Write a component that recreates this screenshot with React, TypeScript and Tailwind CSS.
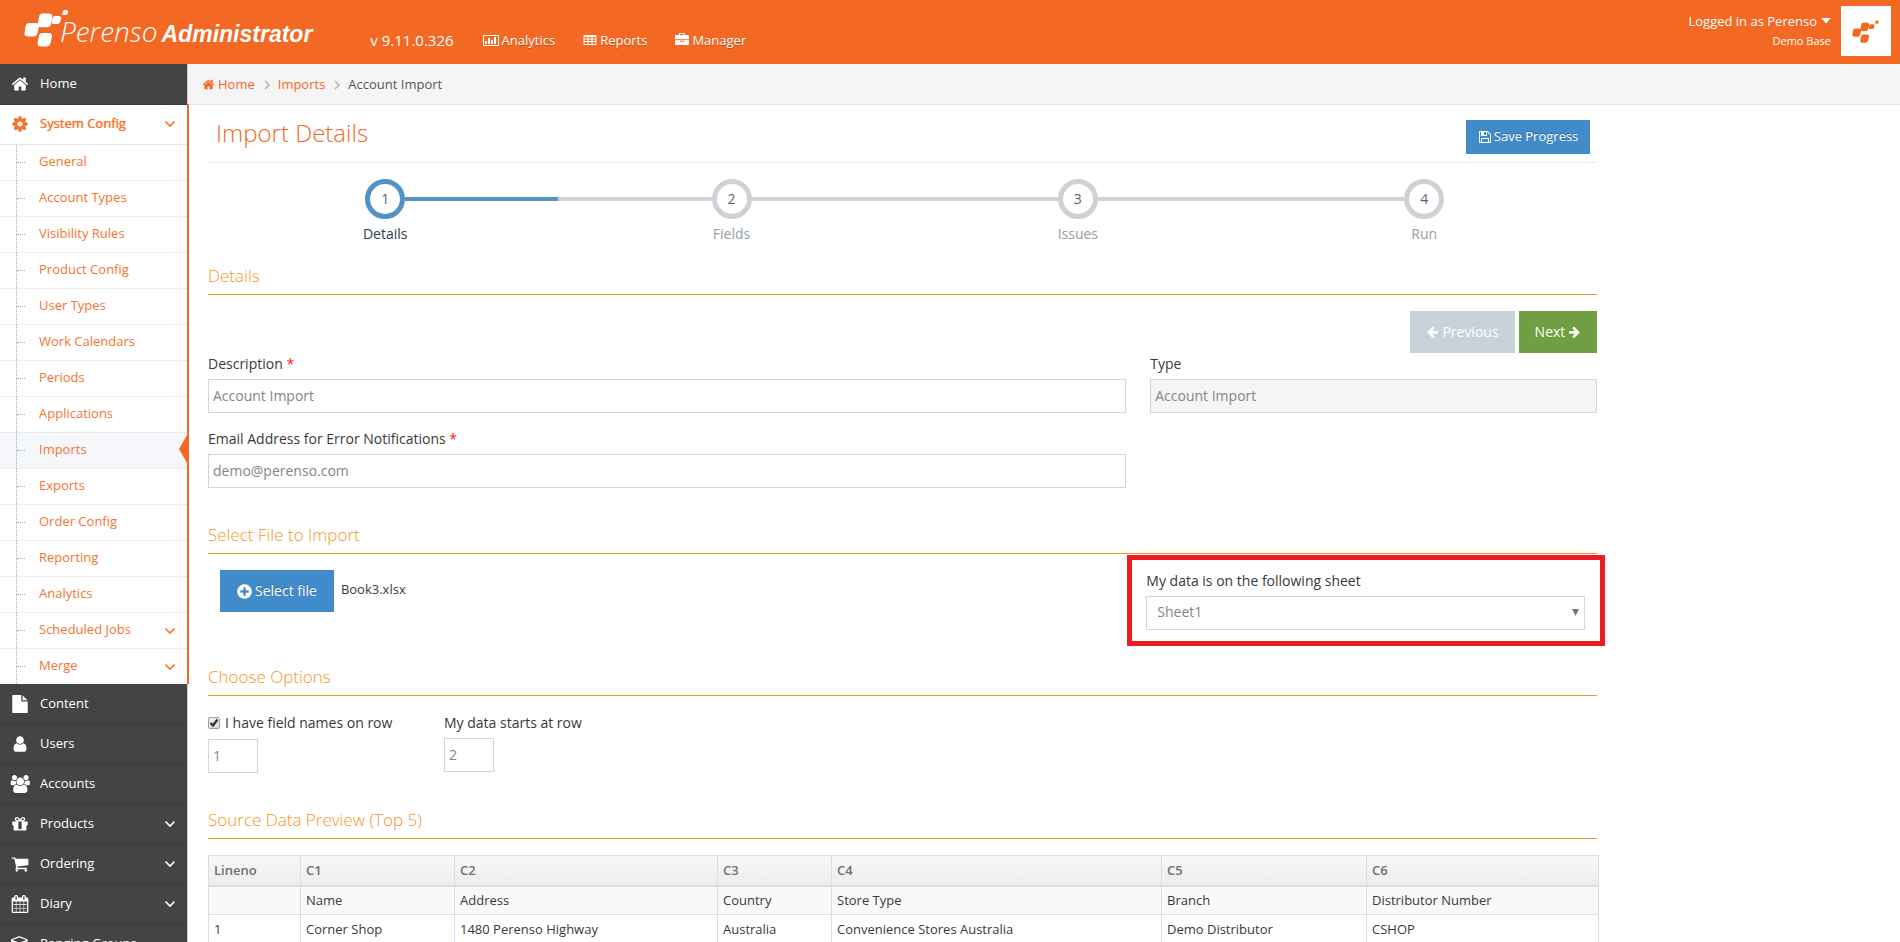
import { useState } from 'react';
import type { ReactNode } from 'react';
import clsx from 'clsx';

interface IconProps {
  name: string;
  className?: string;
  viewBox?: string;
}

interface MenuItem {
  label: string;
  icon: string;
  viewBox?: string;
  expandable?: boolean;
}

const icons: Record<string, string> = {
  home: 'M1472 992v480q0 26-19 45t-45 19h-384v-384h-256v384h-384q-26 0-45-19t-19-45v-480q0-1 .5-3t.5-3l575-474 575 474q1 2 1 6zm223-69l-62 74q-8 9-21 11h-3q-13 0-21-7l-692-577-692 577q-12 8-24 7-13-2-21-11l-62-74q-8-10-7-23.5t11-21.5l719-599q32-26 76-26t76 26l244 204v-195q0-14 9-23t23-9h192q14 0 23 9t9 23v408l219 182q10 8 11 21.5t-7 23.5z',
  cog: 'M1152 896q0-106-75-181t-181-75-181 75-75 181 75 181 181 75 181-75 75-181zm512-109v222q0 12-8 23t-20 13l-185 28q-19 54-39 91 35 50 107 138 10 12 10 25t-9 23q-27 37-99 108t-94 71q-12 0-26-9l-138-108q-44 23-91 38-16 136-29 186-7 28-36 28h-222q-14 0-24.5-8.5t-11.5-21.5l-28-184q-49-16-90-37l-141 107q-10 9-25 9-14 0-25-11-126-114-165-168-7-10-7-23 0-12 8-23 15-21 51-66.5t54-70.5q-27-50-41-99l-183-27q-13-2-21-12.5t-8-23.5v-222q0-12 8-23t19-13l186-28q14-46 39-92-40-57-107-138-10-12-10-24 0-10 9-23 26-36 98.5-107.5t94.5-71.5q13 0 26 10l138 107q44-23 91-38 16-136 29-186 7-28 36-28h222q14 0 24.5 8.5t11.5 21.5l28 184q49 16 90 37l142-107q9-9 24-9 13 0 25 10 129 119 165 170 7 8 7 22 0 12-8 23-15 21-51 66.5t-54 70.5q26 50 41 98l183 28q13 2 21 12.5t8 23.5z',
  file: 'M1152 512v-472q22 14 36 28l408 408q14 14 28 36h-472zm-128 32q0 40 28 68t68 28h544v1056q0 40-28 68t-68 28h-1344q-40 0-68-28t-28-68v-1600q0-40 28-68t68-28h800v544z',
  user: 'M1536 1399q0 109-62.5 187t-150.500 78h-854q-88 0-150.500-78t-62.500-187q0-85 8.500-160.500t31.500-152 58.500-131 94-89 134.500-34.500q131 128 313 128t313-128q76 0 134.500 34.500t94 89 58.500 131 31.500 152 8.500 160.500zm-256-887q0 159-112.500 271.500t-271.500 112.500-271.500-112.500-112.500-271.500 112.500-271.500 271.500-112.500 271.500 112.500 112.500 271.500z',
  users: 'M657 896q-162 5-265 128h-134q-82 0-138-40.500t-56-118.500q0-353 124-353 6 0 43.500 21t97.500 42.500 119 21.500q67 0 133-23-5 37-5 66 0 159 81 256zm1071 637q0 120-73 189.500t-194 69.500h-874q-121 0-194-69.500t-73-189.500q0-53 3.500-103.500t14-109 26.500-108.500 43-97.500 62-81 85.500-53.500 111.500-20q10 0 43 21.500t73 48 107 48 135 21.500 135-21.500 107-48 73-48 43-21.500q61 0 111.500 20t85.500 53.500 62 81 43 97.500 26.500 108.500 14 109 3.500 103.500zm-1024-1277q0 106-75 181t-181 75-181-75-75-181 75-181 181-75 181 75 75 181zm704 384q0 159-112.500 271.500t-271.500 112.500-271.500-112.500-112.500-271.500 112.500-271.500 271.500-112.500 271.500 112.500 112.500 271.500zm576 225q0 78-56 118.500t-138 40.500h-134q-103-123-265-128 81-97 81-256 0-29-5-66 66 23 133 23 59 0 119-21.500t97.500-42.500 43.500-21q124 0 124 353zm-128-609q0 106-75 181t-181 75-181-75-75-181 75-181 181-75 181 75 75 181z',
  gift: 'M1056 1356v-716h-320v716q0 25 18 38.500t46 13.500h192q28 0 46-13.500t18-38.500zm-456-844h195l-126-161q-26-31-69-31-40 0-68 28t-28 68 28 68 68 28zm688-96q0-40-28-68t-68-28q-43 0-69 31l-125 161h194q40 0 68-28t28-68zm376 256v320q0 14-9 23t-23 9h-96v416q0 40-28 68t-68 28h-1088q-40 0-68-28t-28-68v-416h-96q-14 0-23-9t-9-23v-320q0-14 9-23t23-9h440q-93 0-158.500-65.500t-65.500-158.500 65.500-158.500 158.500-65.500q107 0 168 77l128 165 128-165q61-77 168-77 93 0 158.500 65.500t65.500 158.500-65.500 158.500-158.500 65.500h440q14 0 23 9t9 23z',
  cart: 'M704 1536q0 52-38 90t-90 38-90-38-38-90 38-90 90-38 90 38 38 90zm896 0q0 52-38 90t-90 38-90-38-38-90 38-90 90-38 90 38 38 90zm128-1088v512q0 24-16.500 42.500t-40.500 21.500l-1044 122q13 60 13 70 0 16-24 64h920q26 0 45 19t19 45-19 45-45 19h-1024q-26 0-45-19t-19-45q0-11 8-31.500t16-36 21.500-40 15.500-29.500l-177-823h-204q-26 0-45-19t-19-45 19-45 45-19h256q16 0 28.500 6.500t19.500 15.500 13 24.500 8 26 5.500 29.500 4.500 26h1201q26 0 45 19t19 45z',
  calendar: 'M192 1664h288v-288h-288v288zm352 0h320v-288h-320v288zm-352-352h288v-320h-288v320zm352 0h320v-320h-320v320zm-352-384h288v-288h-288v288zm736 736h320v-288h-320v288zm-384-736h320v-288h-320v288zm768 736h288v-288h-288v288zm-384-352h320v-320h-320v320zm-352-864v-288q0-13-9.500-22.500t-22.500-9.500h-64q-13 0-22.500 9.500t-9.500 22.500v288q0 13 9.500 22.500t22.500 9.500h64q13 0 22.500-9.500t9.500-22.500zm736 864h288v-320h-288v320zm-384-384h320v-288h-320v288zm384 0h288v-288h-288v288zm32-480v-288q0-13-9.500-22.500t-22.500-9.500h-64q-13 0-22.500 9.500t-9.500 22.500v288q0 13 9.500 22.500t22.500 9.500h64q13 0 22.500-9.500t9.500-22.500zm384-64v1280q0 52-38 90t-90 38h-1408q-52 0-90-38t-38-90v-1280q0-52 38-90t90-38h128v-96q0-66 47-113t113-47h64q66 0 113 47t47 113v96h384v-96q0-66 47-113t113-47h64q66 0 113 47t47 113v96h128q52 0 90 38t38 90z',
  cube: 'M896 1629l640-349v-636l-640 233v752zm-64-865l698-254-698-254-698 254zm832-252v768q0 35-18 65t-49 47l-704 384q-28 16-61 16t-61-16l-704-384q-31-17-49-47t-18-65v-768q0-40 23-73t61-47l704-256q22-8 44-8t44 8l704 256q38 14 61 47t23 73z',
  briefcase: 'M640 256h512v-128h-512v128zm1152 640v480q0 66-47 113t-113 47h-1472q-66 0-113-47t-47-113v-480h672v160q0 26 19 45t45 19h320q26 0 45-19t19-45v-160h672zm-768 0v128h-256v-128h256zm768-480v384h-1792v-384q0-66 47-113t113-47h352v-160q0-40 28-68t68-28h576q40 0 68 28t28 68v160h352q66 0 113 47t47 113z',
  chart: 'M0 256H2048V1664H0V256zm128 128v1152H1920V384H128zM256 1408V1024H512v384H256zm384 0V640H896v768H640zm384 0V896h256v512h-256zm384 0V512h256v896h-256z',
  table: 'M64 352q0-96 96-96H1632q96 0 96 96V1440q0 96-96 96H160q-96 0-96-96V352zm128 160V704H576V512H192zm512 0V704h384V512H704zm512 0V704h384V512h-384zM192 832v192H576V832H192zm512 0v192h384V832H704zm512 0v192h384V832h-384zM192 1152v256H576v-256H192zm512 0v256h384v-256H704zm512 0v256h384v-256h-384z',
  save: 'M512 1536h768v-384h-768v384zm896 0h128v-896q0-14-10-38.500t-20-34.500l-281-281q-10-10-34-20t-39-10v416q0 40-28 68t-68 28h-576q-40 0-68-28t-28-68v-416h-128v1280h128v-416q0-40 28-68t68-28h832q40 0 68 28t28 68v416zm-384-928v-320q0-13-9.500-22.500t-22.500-9.500h-192q-13 0-22.500 9.500t-9.500 22.500v320q0 13 9.500 22.500t22.500 9.500h192q13 0 22.500-9.500t9.500-22.500zm640 32v928q0 40-28 68t-68 28h-1344q-40 0-68-28t-28-68v-1344q0-40 28-68t68-28h928q40 0 88 20t76 48l280 280q28 28 48 76t20 88z',
  left: 'M1664 896v128q0 53-32.5 90.500t-84.500 37.500h-704l293 294q38 36 38 90t-38 90l-75 76q-37 37-90 37-52 0-91-37l-651-652q-37-37-37-90 0-52 37-91l651-650q38-38 91-38 52 0 90 38l75 74q38 38 38 91t-38 91l-293 293h704q52 0 84.500 37.500t32.500 90.500z',
  right: 'M1600 960q0 54-37 91l-651 651q-39 37-91 37-51 0-90-37l-75-75q-38-38-38-91t38-91l293-293h-704q-52 0-84.500-37.500t-32.500-90.500v-128q0-53 32.500-90.500t84.500-37.500h704l-293-294q-38-36-38-90t38-90l75-75q38-38 90-38 53 0 91 38l651 651q37 35 37 90z',
  plus: 'M1344 960v-128q0-26-19-45t-45-19h-256v-256q0-26-19-45t-45-19h-128q-26 0-45 19t-19 45v256h-256q-26 0-45 19t-19 45v128q0 26 19 45t45 19h256v256q0 26 19 45t45 19h128q26 0 45-19t19-45v-256h256q26 0 45-19t19-45zm320-64q0 209-103 385.500t-279.500 279.500-385.500 103-385.500-103-279.500-279.500-103-385.500 103-385.500 279.500-279.500 385.500-103 385.500 103 279.500 279.500 103 385.500z',
};

function Icon({ name, className, viewBox = '0 0 1792 1792' }: IconProps) {
  return (
    <svg viewBox={viewBox} className={clsx('shrink-0', className)} fill="currentColor" fillRule="evenodd" aria-hidden="true">
      <path d={icons[name]} />
    </svg>
  );
}

function ChevronDown({ className }: { className?: string }) {
  return (
    <svg viewBox="0 0 12 8" className={clsx('h-2 w-3 shrink-0', className)} fill="none" stroke="currentColor" strokeWidth="1.6" aria-hidden="true">
      <path d="M1.500 1.500 6 6l4.500-4.500" />
    </svg>
  );
}

function CrumbArrow() {
  return (
    <svg viewBox="0 0 6 10" className="mr-2 ml-[9px] h-2.5 w-1.5" fill="none" stroke="#b2b6bf" strokeWidth="1.6" aria-hidden="true">
      <path d="M1 1l4 4-4 4" />
    </svg>
  );
}

function LogoMark({ className }: { className?: string }) {
  return (
    <svg viewBox="0 0 46 38" className={clsx('shrink-0', className)} fill="currentColor" aria-hidden="true">
      <path d="M5 14h7q3.500 0 3 3l-1.500 7q-.8 3.500-4 3.500H4q-4 0-3.500-3.500L1.500 17.500Q2 14 5 14z" />
      <path d="M18 4.500h7q3.800 0 3.300 3.500L27 15q-.7 3.200-4 3.200h-6q-3.700 0-3.200-3.500L15 8q.6-3.500 3-3.500z" />
      <path d="M18 24h7q3.500 0 3 3.500L26.500 34q-.8 3.500-4 3.500H17q-4 0-3.500-3.500l1.200-6.500Q15.300 24 18 24z" />
      <path d="M31 7h4q2.300 0 2 2l-.7 3.500Q35.700 15 33.500 15h-4q-2.200 0-1.800-2l.8-4Q29 7 31 7z" />
      <path d="M40.500 1h2q2 0 1.700 1.500l-.5 2Q43.200 6 41.500 6h-2Q38 6 38.200 4.500l.5-2Q39 1 40.500 1z" />
    </svg>
  );
}

const navLinks = [
  { label: 'Analytics', icon: 'chart', viewBox: '0 0 2048 1792' },
  { label: 'Reports', icon: 'table' },
  { label: 'Manager', icon: 'briefcase' },
];

const configItems = [
  'General', 'Account Types', 'Visibility Rules', 'Product Config', 'User Types',
  'Work Calendars', 'Periods', 'Applications', 'Imports', 'Exports', 'Order Config',
  'Reporting', 'Analytics', 'Scheduled Jobs', 'Merge',
];
const expandableConfig = ['Scheduled Jobs', 'Merge'];

const menuItems: MenuItem[] = [
  { label: 'Content', icon: 'file' },
  { label: 'Users', icon: 'user' },
  { label: 'Accounts', icon: 'users', viewBox: '0 0 2048 1792' },
  { label: 'Products', icon: 'gift', expandable: true },
  { label: 'Ordering', icon: 'cart', expandable: true },
  { label: 'Diary', icon: 'calendar', expandable: true },
  { label: 'Ranging Groups', icon: 'cube' },
];

const steps = ['Details', 'Fields', 'Issues', 'Run'];

const columns = [
  { label: 'Lineno', width: 'w-[92px]' },
  { label: 'C1', width: 'w-[154px]' },
  { label: 'C2', width: 'w-[263px]' },
  { label: 'C3', width: 'w-[114px]' },
  { label: 'C4', width: 'w-[330px]' },
  { label: 'C5', width: 'w-[205px]' },
  { label: 'C6', width: 'w-[232px]' },
];

const rows = [
  ['', 'Name', 'Address', 'Country', 'Store Type', 'Branch', 'Distributor Number'],
  ['1', 'Corner Shop', '1480 Perenso Highway', 'Australia', 'Convenience Stores Australia', 'Demo Distributor', 'CSHOP'],
];

function Header() {
  return (
    <header className="flex h-16 shrink-0 items-start bg-[#f36822] text-white">
      <a href="#" className="flex pt-[9px] pl-6">
        <LogoMark className="h-[38px] w-[46px]" />
        <span className="-ml-2.5 flex items-baseline gap-1 pt-1">
          <span className="text-[28px] leading-9 font-light italic">Perenso</span>
          <span className="font-['Liberation_Sans_Narrow','Liberation_Sans',sans-serif] text-[23px] leading-9 font-bold italic">Administrator</span>
        </span>
      </a>
      <span className="pt-7 pl-[58px] text-[15px] leading-6">v 9.11.0.326</span>
      <nav className="flex gap-7 pt-[30px] pl-[29px] text-[13px] leading-5 [text-shadow:0_1px_0_rgba(0,0,0,0.25)]">
        {navLinks.map(link => (
          <a key={link.label} href="#" className="flex items-center gap-[3px]">
            <Icon name={link.icon} viewBox={link.viewBox} className="h-3.5" />
            {link.label}
          </a>
        ))}
      </nav>
      <div className="ml-auto flex gap-2.5 pt-1.5 pr-[9px]">
        <div className="flex flex-col items-end pt-[5px]">
          <button type="button" className="flex items-center gap-1 text-[13px] leading-5">
            Logged in as Perenso
            <svg viewBox="0 0 10 6" className="h-1.5 w-2.5" fill="currentColor" aria-hidden="true"><path d="M0 0h10L5 5.500z" /></svg>
          </button>
          <span className="text-[11px] leading-5">Demo Base</span>
        </div>
        <div className="flex size-[50px] items-center justify-center bg-white">
          <LogoMark className="h-[23px] w-7 text-[#f36822]" />
        </div>
      </div>
    </header>
  );
}

function Sidebar() {
  return (
    <aside className="w-[188px] shrink-0 border-r border-[#ccc] bg-[#444] text-[13px] text-white">
      <a href="#" className="flex h-10 items-center">
        <span className="flex w-10 justify-center"><Icon name="home" className="h-[18px]" /></span>
        Home
      </a>

      {/* open section, its edge runs over the sidebar border */}
      <div className="relative -mr-0.5 border-r-2 border-[#f36822] bg-white text-[#f3752f]">
        <button type="button" className="flex h-10 w-full items-center border-t border-[#393939] pr-[11px] pb-0.5 text-left">
          <span className="flex w-10 justify-center"><Icon name="cog" className="h-[18px]" /></span>
          <span className="grow [text-shadow:0_0_1px_#f3752f]">System Config</span>
          <ChevronDown />
        </button>
        <ul className="border-t border-[#e5e5e5]">
          {configItems.map((item, i) => (
            <li
              key={item}
              className={clsx('relative border-dotted border-[#dcdcdc]', i === 0 ? 'h-[35px]' : 'h-9 border-t', item === 'Imports' && 'bg-[#f6f7fb]')}
            >
              <a href="#" className="flex h-full items-center pr-[11px]">
                <span className="h-full w-[17px] border-r border-dotted border-[#8fb1cc]" />
                <span className="w-2 border-t border-dotted border-[#8fb1cc]" />
                <span className="grow pb-0.5 pl-3.5">{item}</span>
                {expandableConfig.includes(item) && <ChevronDown />}
              </a>
              {item === 'Imports' && (
                <svg viewBox="0 0 8 28" className="absolute top-0.5 right-0 h-7 w-2" fill="#f36822" aria-hidden="true"><path d="M8 0v28L0 14z" /></svg>
              )}
            </li>
          ))}
        </ul>
      </div>

      {menuItems.map((item, i) => (
        <a key={item.label} href="#" className={clsx('flex h-10 items-center pr-[11px]', i > 0 && 'border-t border-[#393939] pb-0.5')}>
          <span className="flex w-10 justify-center"><Icon name={item.icon} viewBox={item.viewBox} className="h-[18px]" /></span>
          <span className="grow">{item.label}</span>
          {item.expandable && <ChevronDown />}
        </a>
      ))}
    </aside>
  );
}

function SectionTitle({ children }: { children: ReactNode }) {
  return <h2 className="border-b border-[#f7941e] pb-1.5 text-[17px] leading-6 font-light text-[#f7941e]">{children}</h2>;
}

function Wizard() {
  return (
    <ol className="flex pt-4 pl-1 text-sm">
      {steps.map((step, i) => (
        <li key={step} className="flex flex-1 flex-col items-center">
          <div className="flex w-full items-center">
            <span className={clsx('h-1 grow', i > 0 && 'bg-[#ced1d6]')} />
            <span className={clsx('flex size-10 items-center justify-center rounded-full border-[5px] bg-white leading-5 text-[#546474]', i === 0 ? 'border-[#5293c4]' : 'border-[#ced1d6]')}>
              {i + 1}
            </span>
            <span className={clsx('h-1 grow', i === 0 && 'bg-[#5293c4]', i > 0 && i < 3 && 'bg-[#ced1d6]')} />
          </div>
          <span className={clsx('mt-[5px] leading-5', i === 0 ? 'text-[#2b3d53]' : 'text-[#949ea7]')}>{step}</span>
        </li>
      ))}
    </ol>
  );
}

const fieldClass = 'block h-[34px] w-full border border-[#d5d5d5] px-1 pb-0.5 text-sm text-[#858585] outline-none';

export default function App() {
  const [description, setDescription] = useState('Account Import');
  const [email, setEmail] = useState('demo@perenso.com');
  const [hasNames, setHasNames] = useState(true);
  const [nameRow, setNameRow] = useState('1');
  const [startRow, setStartRow] = useState('2');

  return (
    <div className="flex h-screen flex-col overflow-hidden bg-white font-['Open_Sans',sans-serif] text-[#393939]">
      <Header />
      <div className="flex grow">
        <Sidebar />
        <main className="min-w-0 grow">
          <nav aria-label="Breadcrumb" className="flex h-[41px] items-center border-b border-[#e5e5e5] bg-[#f5f5f5] px-3.5 pt-px text-[13px] text-[#555]">
            <a href="#" className="flex items-center gap-[3px] text-[#f36822]"><Icon name="home" className="h-[13px]" />Home</a>
            <CrumbArrow />
            <a href="#" className="text-[#f36822]">Imports</a>
            <CrumbArrow />
            <span>Account Import</span>
          </nav>

          <div className="px-2">
            <div className="w-10/12 px-3">
              <div className="flex items-start justify-between border-b border-dotted border-[#dcdcdc] pt-[15px] pr-[7px] pb-2 pl-2">
                <h1 className="text-2xl leading-[26px] font-light text-[#f36822]">Import Details</h1>
                <button type="button" className="flex h-[34px] items-center gap-0.5 bg-[#428bca] px-3 text-[13px] text-white [text-shadow:0_-1px_0_rgba(0,0,0,0.25)]">
                  <Icon name="save" className="h-3.5" />
                  Save Progress
                </button>
              </div>

              <Wizard />

              <section className="pt-5">
                <SectionTitle>Details</SectionTitle>
                <div className="flex justify-end gap-1 pt-4 text-sm text-white [text-shadow:0_-1px_0_rgba(0,0,0,0.2)]">
                  <button type="button" disabled className="flex h-[42px] items-center gap-[3px] bg-[#c9d1d9] px-4"><Icon name="left" className="h-3.5 w-[13px]" />Previous</button>
                  <button type="button" className="flex h-[42px] items-center gap-[3px] bg-[#6f9e43] px-4">Next<Icon name="right" className="h-3.5 w-[13px]" /></button>
                </div>
                <div className="-mx-3 flex pt-px text-sm leading-5">
                  <div className="w-8/12 px-3">
                    <label htmlFor="description" className="block pb-[5px]">Description <span className="text-[#f22]">*</span></label>
                    <input id="description" className={fieldClass} value={description} onChange={e => setDescription(e.target.value)} />
                  </div>
                  <div className="w-4/12 px-3">
                    <label htmlFor="type" className="block pb-[5px]">Type</label>
                    <input id="type" className={clsx(fieldClass, 'bg-[#f5f5f5]')} value="Account Import" readOnly />
                  </div>
                </div>
                <div className="-mx-3 flex pt-4 text-sm leading-5">
                  <div className="w-8/12 px-3">
                    <label htmlFor="email" className="block pb-[5px]">Email Address for Error Notifications <span className="text-[#f22]">*</span></label>
                    <input id="email" type="email" className={fieldClass} value={email} onChange={e => setEmail(e.target.value)} />
                  </div>
                </div>
              </section>

              <section className="pt-[35px]">
                <SectionTitle>Select File to Import</SectionTitle>
                <div className="relative flex items-start justify-between px-3 pt-4">
                  <div className="flex items-center gap-[7px]">
                    <button type="button" className="flex h-[42px] items-center gap-0.5 bg-[#428bca] pr-[17px] pl-4 text-sm text-white [text-shadow:0_-1px_0_rgba(0,0,0,0.25)]">
                      <Icon name="plus" className="h-[17px]" />
                      Select file
                    </button>
                    <span className="pb-0.5 text-[13px]">Book3.xlsx</span>
                  </div>
                  <div className="relative w-[439px] pt-px text-sm leading-5">
                    <label htmlFor="sheet" className="block pb-[5px]">My data is on the following sheet</label>
                    <select id="sheet" className={clsx(fieldClass, 'appearance-none pl-2.5')} defaultValue="Sheet1">
                      <option>Sheet1</option>
                    </select>
                    <svg viewBox="0 0 7 7" className="pointer-events-none absolute right-1.5 bottom-3.5 size-[7px]" fill="#777" aria-hidden="true"><path d="M0 0h7L3.500 7z" /></svg>
                  </div>
                  <div className="pointer-events-none absolute top-px -right-2 h-[91px] w-[478px] border-[5px] border-[#ed1c24]" />
                </div>
              </section>

              <section className="pt-[35px]">
                <SectionTitle>Choose Options</SectionTitle>
                <div className="flex items-start pt-[17px] text-sm leading-5">
                  <div className="w-[236px]">
                    <label className="flex items-center gap-[5px] pb-1.5">
                      <span className="relative flex">
                        <input
                          type="checkbox"
                          checked={hasNames}
                          onChange={e => setHasNames(e.target.checked)}
                          className="size-3 appearance-none rounded-xs border border-[#a0a0a0] bg-linear-to-b from-[#eee] to-[#ddd]"
                        />
                        {hasNames && (
                          <svg viewBox="0 0 12 12" className="pointer-events-none absolute inset-0" fill="none" stroke="#333" strokeWidth="2.200" aria-hidden="true"><path d="M2.500 6 5 8.500l4.500-6" /></svg>
                        )}
                      </span>
                      I have field names on row
                    </label>
                    <input aria-label="Field names row" className={clsx(fieldClass, 'max-w-[50px]')} value={nameRow} onChange={e => setNameRow(e.target.value)} />
                  </div>
                  <div>
                    <label htmlFor="start-row" className="block pb-[5px]">My data starts at row</label>
                    <input id="start-row" className={clsx(fieldClass, 'max-w-[50px]')} value={startRow} onChange={e => setStartRow(e.target.value)} />
                  </div>
                </div>
              </section>

              <section className="pt-[35px]">
                <SectionTitle>Source Data Preview (Top 5)</SectionTitle>
                <table className="mt-4 w-full table-fixed border-collapse text-left text-[13px] leading-5">
                  <thead>
                    <tr className="bg-linear-to-b from-[#f8f8f8] to-[#ececec] text-[#707070]">
                      {columns.map(col => (
                        <th key={col.label} className={clsx('h-[30px] border border-b-2 border-[#ddd] px-[5px] font-semibold', col.width)}>{col.label}</th>
                      ))}
                    </tr>
                  </thead>
                  <tbody>
                    {rows.map((row, r) => (
                      <tr key={r} className="odd:bg-[#f9f9f9]">
                        {row.map((cell, c) => (
                          <td key={c} className="h-[29px] border border-[#ddd] px-[5px]">{cell}</td>
                        ))}
                      </tr>
                    ))}
                  </tbody>
                </table>
              </section>
            </div>
          </div>
        </main>
      </div>
    </div>
  );
}
